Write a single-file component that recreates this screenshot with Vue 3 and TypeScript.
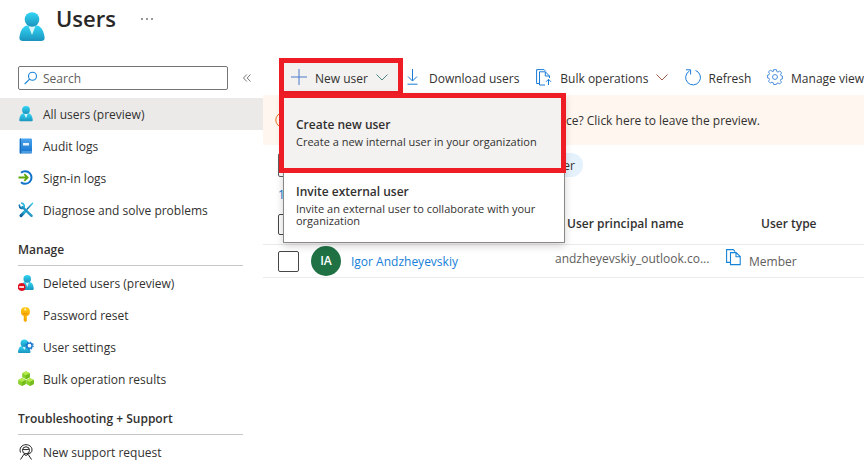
<script setup lang="ts">
import { ref } from 'vue'

interface NavItem {
  label: string
  icon: string
}

interface NavGroup {
  title?: string
  items: NavItem[]
}

interface UserRow {
  initials: string
  name: string
  principal: string
  type: string
}

const search = ref('')
const filter = ref('')
const selected = ref('All users (preview)')

const groups: NavGroup[] = [
  {
    items: [
      { label: 'All users (preview)', icon: 'user' },
      { label: 'Audit logs', icon: 'book' },
      { label: 'Sign-in logs', icon: 'signin' },
      { label: 'Diagnose and solve problems', icon: 'tools' },
    ],
  },
  {
    title: 'Manage',
    items: [
      { label: 'Deleted users (preview)', icon: 'deleted' },
      { label: 'Password reset', icon: 'key' },
      { label: 'User settings', icon: 'settings' },
      { label: 'Bulk operation results', icon: 'cubes' },
    ],
  },
  {
    title: 'Troubleshooting + Support',
    items: [{ label: 'New support request', icon: 'support' }],
  },
]

const rows: UserRow[] = [
  { initials: 'IA', name: 'Igor Andzheyevskiy', principal: 'andzheyevskiy_outlook.co...', type: 'Member' },
]
</script>

<template>
  <div class="page">
    <svg class="defs" aria-hidden="true">
      <defs>
        <linearGradient id="cyan" x1="0" y1="0" x2="0" y2="1">
          <stop offset="0" stop-color="#33d6f5" />
          <stop offset="1" stop-color="#1a93bd" />
        </linearGradient>
        <linearGradient id="blue" x1="0" y1="0" x2="0" y2="1">
          <stop offset="0" stop-color="#4ba4ee" />
          <stop offset="1" stop-color="#1273cc" />
        </linearGradient>
        <linearGradient id="tool" x1="1" y1="0" x2="0" y2="1">
          <stop offset="0" stop-color="#35cfee" />
          <stop offset="1" stop-color="#0c5f9e" />
        </linearGradient>
        <linearGradient id="gold" x1="0" y1="0" x2="0" y2="1">
          <stop offset="0" stop-color="#ffcb12" />
          <stop offset="1" stop-color="#f7a400" />
        </linearGradient>
        <symbol id="person" viewBox="0 0 26 29">
          <path d="M4 29C1.200 29 .2 27.500.4 25.500 1.200 18.500 4 14 8.500 13.500h9C22 14 24.800 18.500 25.600 25.500c.2 2-.8 3.500-3.600 3.500z" fill="url(#cyan)" />
          <path d="M9.300 13.500h7.400L13 23z" fill="#d8f6fc" />
          <circle cx="13" cy="7.500" r="7.300" fill="url(#cyan)" />
        </symbol>
      </defs>
    </svg>

    <header class="title-bar">
      <svg class="title-icon" viewBox="0 0 26 29" aria-hidden="true"><use href="#person" /></svg>
      <h1>Users</h1>
      <button class="more" type="button" aria-label="More"><i></i><i></i><i></i></button>
    </header>

    <div class="body">
      <nav class="sidebar" aria-label="Users">
        <div class="search-row">
          <div class="search">
            <svg viewBox="0 0 14 14" width="14" height="14" aria-hidden="true">
              <g fill="none" stroke="#1683d8" stroke-width="1.100"><circle cx="8.500" cy="5.300" r="4" /><path d="M5.600 8.200.7 13" /></g>
            </svg>
            <input v-model="search" type="text" placeholder="Search" aria-label="Search" />
          </div>
          <button class="collapse" type="button" aria-label="Collapse">
            <svg viewBox="0 0 8 8" width="8" height="8"><path d="M3.800.5.500 4l3.300 3.500M7.500.5 4.200 4l3.300 3.500" fill="none" stroke="#666" stroke-width=".9" /></svg>
          </button>
        </div>

        <section v-for="(group, i) in groups" :key="i">
          <h2 v-if="group.title">{{ group.title }}</h2>
          <ul>
            <li v-for="item in group.items" :key="item.label">
              <a href="#" :class="{ active: item.label === selected }" @click.prevent="selected = item.label">
                <svg class="nav-icon" viewBox="0 0 16 16" aria-hidden="true">
                  <use v-if="item.icon === 'user'" href="#person" x="1" y="0" width="14" height="15.500" />
                  <g v-else-if="item.icon === 'book'">
                    <rect x="1.500" y=".5" width="12.500" height="15" rx="1" fill="url(#blue)" />
                    <path d="M2.500.5v15" stroke="#1a6cb8" />
                    <path d="M3.500 14h10.500" stroke="#9bd0f7" stroke-width=".8" />
                    <rect x="5" y="5" width="6" height="2.500" fill="#e6f3fd" />
                  </g>
                  <g v-else-if="item.icon === 'signin'" fill="none">
                    <path d="M3 2.800A6.300 6.300 0 1 1 3 12.200" stroke="#0f73c9" stroke-width="2" />
                    <path d="M.5 7.500h9M6.300 4.200 9.600 7.500l-3.300 3.300" stroke="#5fa80d" stroke-width="1.800" />
                  </g>
                  <g v-else-if="item.icon === 'tools'" fill="none" stroke="url(#tool)" stroke-linecap="round">
                    <path d="M14.600 1.200 9 7.300" stroke-width="1.400" />
                    <path d="M8 8.500 3 13.600" stroke-width="3" />
                    <path d="M4.500 5 13.600 13.800" stroke-width="2.400" />
                    <path d="M1.400 3.200c0 3 3 4 4.300 2.500S6 1.500 3.800 1.200" stroke-width="1.700" />
                  </g>
                  <g v-else-if="item.icon === 'deleted'">
                    <use href="#person" x="2.500" y="0" width="13.500" height="15" />
                    <circle cx="3.600" cy="12" r="3.900" fill="#e01020" />
                    <rect x="1.200" y="11.200" width="4.800" height="1.600" fill="#fff" />
                  </g>
                  <g v-else-if="item.icon === 'key'">
                    <path d="M5.700 8h3.200v5.500L7.300 15.300l-1.600-1.800z" fill="url(#gold)" />
                    <rect x="3" y=".3" width="8.800" height="8.700" rx="3.800" fill="url(#gold)" />
                    <circle cx="7.300" cy="2.500" r="1.100" fill="#fff4c8" />
                    <path d="M5.300 6.500h4.200M6.700 9v4" stroke="#e78f00" stroke-width=".7" />
                  </g>
                  <g v-else-if="item.icon === 'settings'">
                    <path d="M0 12.500C.5 9 2 7.300 4 7h4.500c2 .3 3.600 2 4 5.500 0 1-.5 1.500-1.500 1.500H1.200C.3 14 0 13.500 0 12.500z" fill="url(#cyan)" />
                    <path d="M4.400 7.300h3.800L6.300 11z" fill="#d8f6fc" />
                    <circle cx="6.300" cy="4.200" r="3.700" fill="url(#cyan)" />
                    <circle cx="11.500" cy="6.700" r="2.600" fill="#fff" stroke="#1476cf" stroke-width="1.400" />
                    <circle cx="11.500" cy="6.700" r="3.700" fill="none" stroke="#1476cf" stroke-width="1.200" stroke-dasharray="1.450 1.450" />
                  </g>
                  <g v-else-if="item.icon === 'cubes'">
                    <g v-for="(c, n) in [[8, 0.3], [4, 7], [12, 7]]" :key="n">
                      <path :d="`M${c[0]} ${c[1]}l3.800 2v4l-3.800 2-3.800-2v-4z`" fill="#86cf28" />
                      <path :d="`M${c[0]} ${c[1]}l3.800 2-3.800 2-3.800-2z`" fill="#b5ea4c" />
                      <path :d="`M${c[0]} ${c[1] + 4}v4l3.800-2v-4z`" fill="#74bb1e" />
                    </g>
                  </g>
                  <g v-else fill="none" stroke="#222">
                    <circle cx="8" cy="6.300" r="3.500" />
                    <path d="M2.500 8.500C.8 4 4 .7 8 .7s7 3 5.700 6.800C13 9.300 11.500 9.500 9.500 9.500M2.500 15.500 6 10.200l2 1.300 2-1.300 3.500 5.300M4.700 5.500c2 .4 4.500 0 6.700-.3" />
                  </g>
                </svg>
                <span>{{ item.label }}</span>
              </a>
            </li>
          </ul>
        </section>
      </nav>

      <main>
        <div class="toolbar">
          <div class="new-user">
            <button class="command framed" type="button" aria-haspopup="menu" aria-expanded="true">
              <svg width="16" height="16" viewBox="0 0 16 16"><path d="M8 0v16M0 8h16" fill="none" stroke="#4a78c8" /></svg>
              <span>New user</span>
              <svg width="12" height="7" viewBox="0 0 12 7"><path d="M.5.5 6 6 11.500.5" fill="none" stroke="#4f8583" /></svg>
            </button>
            <div class="menu" role="menu">
              <button class="menu-item highlighted" type="button" role="menuitem">
                <strong>Create new user</strong>
                <span>Create a new internal user in your organization</span>
              </button>
              <button class="menu-item" type="button" role="menuitem">
                <strong>Invite external user</strong>
                <span>Invite an external user to collaborate with your organization</span>
              </button>
            </div>
          </div>
          <button class="command download" type="button">
            <svg width="12" height="16" viewBox="0 0 12 16"><path d="M5.500 0v12M1 7.500 5.500 12 10 7.500M.5 15.200h10" fill="none" stroke="#1b7bd6" /></svg>
            <span>Download users</span>
          </button>
          <button class="command bulk" type="button">
            <svg width="16" height="17" viewBox="0 0 16 17">
              <path d="M3 14.500H.6V.6h7.500l1.700 1.700M9 16H3.500V2.800h5.800L13.500 7v2M9.300 3v4h4M12.500 16v-5.500M10 12.800l2.500-2.500 2.500 2.500" fill="none" stroke="#1b7bd6" />
            </svg>
            <span>Bulk operations</span>
            <svg width="12" height="7" viewBox="0 0 12 7"><path d="M.5.5 6 6 11.500.5" fill="none" stroke="#9c5f4e" /></svg>
          </button>
          <button class="command refresh" type="button">
            <svg width="16" height="17" viewBox="0 0 16 17"><path d="M10.500 1.500A7.400 7.400 0 1 1 4.500 2M1 .8h4.600v4.700" fill="none" stroke="#1b7bd6" /></svg>
            <span>Refresh</span>
          </button>
          <button class="command" type="button">
            <svg width="16" height="16" viewBox="0 0 17 17">
              <g fill="none" stroke="#3f86d8">
                <path d="M7 .7h3l.4 2 1.300.6 1.800-1.200 2 2-1.200 1.800.6 1.300 1.500.3v3l-1.700.4-.5 1.300 1.200 1.700-2 2-1.700-1.100-1.300.5L10 16.400H7l-.4-1.900-1.300-.6-1.700 1.100-2-2 1.100-1.700-.6-1.400L.6 9.500v-3l1.500-.3.6-1.300-1.100-1.800 2-2 1.700 1.200L6.600 2.700z" />
                <circle cx="8.500" cy="8.500" r="2.600" />
              </g>
            </svg>
            <span>Manage view</span>
          </button>
        </div>

        <div class="banner">
          <svg width="16" height="16" viewBox="0 0 16 16" aria-hidden="true"><circle cx="8" cy="8" r="7.200" fill="none" stroke="#e8741e" /><path d="M8 4v1.500M8 7v5" stroke="#e8741e" /></svg>
          <p>experience? Click here to leave the preview.</p>
        </div>

        <div class="filters">
          <input v-model="filter" type="text" aria-label="Filter users" />
          <button class="pill" type="button">Add filter</button>
        </div>
        <p class="count">{{ rows.length }}</p>

        <table>
          <thead>
            <tr>
              <th class="check"><input type="checkbox" aria-label="Select all users" /></th>
              <th class="name"></th>
              <th class="principal">User principal name</th>
              <th>User type</th>
            </tr>
          </thead>
          <tbody>
            <tr v-for="row in rows" :key="row.principal">
              <td class="check"><input type="checkbox" :aria-label="`Select ${row.name}`" /></td>
              <td class="name">
                <div class="person">
                  <span class="avatar">{{ row.initials }}</span>
                  <a href="#" @click.prevent>{{ row.name }}</a>
                </div>
              </td>
              <td class="principal">
                <div class="copyable">
                  <span>{{ row.principal }}</span>
                  <button type="button" aria-label="Copy">
                    <svg width="15" height="17" viewBox="0 0 15 17"><path d="M4 13.400H.6V.6h6.600l2 2M4.500 15.600V3.600h5.700l4 4v8zM10 3.800v4h4" fill="none" stroke="#1683d8" stroke-width="1.100" /></svg>
                  </button>
                </div>
              </td>
              <td class="type">{{ row.type }}</td>
            </tr>
          </tbody>
        </table>
      </main>
    </div>
  </div>
</template>

<style>
body {
  background: #fff;
  overflow: hidden;
}
</style>

<style scoped>
* {
  box-sizing: border-box;
}
.page {
  font: 12px/16px "Open Sans", "Noto Sans", sans-serif;
  color: #323130;
}
.defs {
  display: block;
  width: 0;
  height: 0;
}
h1, h2, p, ul {
  margin: 0;
  padding: 0;
}
ul {
  list-style: none;
}
button {
  font: inherit;
  color: inherit;
  border: 0;
  padding: 0;
  background: none;
  text-align: left;
}
button svg {
  display: block;
}
a {
  text-decoration: none;
}
.title-bar {
  display: flex;
  align-items: flex-start;
  height: 58px;
  padding: 0 19px;
}
.title-icon {
  width: 26px;
  height: 29px;
  margin-top: 12px;
}
h1 {
  margin: 2px 0 0 11px;
  font-size: 22px;
  line-height: 32px;
  font-weight: 600;
  color: #292827;
}
.more {
  display: flex;
  gap: 3px;
  padding: 18px 0 0 25px;
}
.more i {
  width: 2px;
  height: 2px;
  border-radius: 1px;
  background: #777;
}
.body {
  display: flex;
}
.sidebar {
  flex: 0 0 263px;
}
.search-row {
  display: flex;
  align-items: center;
  gap: 15px;
  padding: 8px 12px 8px 18px;
}
.search {
  display: flex;
  align-items: center;
  gap: 5px;
  flex: 0 0 210px;
  height: 24px;
  padding-left: 5px;
  border: 1px solid #777573;
  border-radius: 2px;
}
.search input {
  flex: 1;
  min-width: 0;
  padding: 2px 0 0;
  border: 0;
  outline: 0;
  background: none;
  font: inherit;
}
.search input::placeholder {
  color: #605e5c;
  opacity: 1;
}
section a {
  display: flex;
  align-items: center;
  gap: 9px;
  height: 32px;
  padding-left: 18px;
  color: #323130;
}
section a span {
  padding-top: 2px;
}
.command span {
  padding-top: 4px;
}
section a.active {
  background: #ebeae9;
}
.nav-icon {
  width: 16px;
  height: 16px;
}
h2 {
  height: 40px;
  margin: 0 20px 1px 18px;
  padding-top: 16px;
  border-bottom: 1px solid #c8c6c4;
  font-size: 12px;
  line-height: 16px;
  font-weight: 600;
}
main {
  flex: 1;
  min-width: 0;
}
.toolbar {
  display: flex;
  height: 37px;
  padding-left: 16px;
}
.new-user {
  position: relative;
  z-index: 1;
}
.command {
  display: flex;
  align-items: center;
  gap: 8px;
  height: 38px;
  white-space: nowrap;
}
.command svg {
  flex: none;
}
.framed {
  width: 124px;
  padding: 0 8px 0 7px;
  border: 5px solid #ee1c25;
  background: #f3f2f1;
}
.download {
  width: 131px;
  padding-left: 4px;
  gap: 10px;
}
.bulk {
  width: 152px;
  padding-left: 3px;
}
.refresh {
  width: 83px;
}
.menu {
  position: absolute;
  top: 35px;
  left: 4px;
  width: 282px;
  border: 1px solid #8a8886;
  border-top: 0;
  background: #fff;
  box-shadow: 0 3px 8px rgba(0, 0, 0, 0.18);
}
.menu-item {
  display: block;
  width: 100%;
  padding: 11px 12px 15px;
  font-size: 11px;
  line-height: 12px;
}
.menu-item strong {
  display: block;
  margin-bottom: 3px;
  font-size: 12px;
  line-height: 16px;
  font-weight: 600;
}
.menu-item span {
  display: block;
}
.highlighted {
  width: 287px;
  margin: 0 -2px 0 -5px;
  padding: 19px 12px 20px;
  border: 5px solid #ee1c25;
  background: #f3f2f1;
}
.banner {
  display: flex;
  align-items: center;
  height: 50px;
  padding-left: 12px;
  background: #fff6ef;
}
.banner p {
  width: 469px;
  padding-top: 2px;
  text-align: right;
  white-space: nowrap;
}
.filters {
  display: flex;
  align-items: center;
  gap: 8px;
  padding: 8px 0 8px 15px;
}
.filters input {
  width: 220px;
  height: 24px;
  border: 1px solid #605e5c;
  border-radius: 2px;
}
.pill {
  width: 77px;
  height: 24px;
  padding: 2px 8px 0 0;
  border-radius: 12px;
  background: #e5f1fb;
  text-align: right;
}
.count {
  padding: 1px 0 0 15px;
  line-height: 17px;
  color: #0f78d4;
}
table {
  width: 100%;
  table-layout: fixed;
  border-collapse: collapse;
}
th, td {
  padding: 2px 0 0;
  border-bottom: 1px solid #edebe9;
  text-align: left;
}
th {
  height: 41px;
  padding-left: 12px;
  font-weight: 600;
}
th.check, td.check {
  width: 48px;
  padding-left: 15px;
}
td {
  height: 33px;
}
.name {
  width: 244px;
}
td.name {
  padding-top: 0;
}
.principal {
  width: 194px;
}
.check input {
  display: block;
  appearance: none;
  width: 21px;
  height: 21px;
  margin: 0;
  border: 1px solid #484644;
  border-radius: 2px;
  background: #fff;
}
.person {
  display: flex;
  align-items: center;
  gap: 10px;
}
.avatar {
  width: 30px;
  height: 30px;
  border-radius: 50%;
  background: #207245;
  color: #fff;
  font-weight: 600;
  line-height: 30px;
  text-align: center;
}
.person a {
  padding-top: 2px;
  color: #1680d8;
}
.copyable {
  display: flex;
  align-items: center;
  justify-content: space-between;
  padding: 0 8px 8px 0;
  color: #605e5c;
}
.copyable span {
  padding-top: 2px;
}
.type {
  color: #605e5c;
}
</style>
